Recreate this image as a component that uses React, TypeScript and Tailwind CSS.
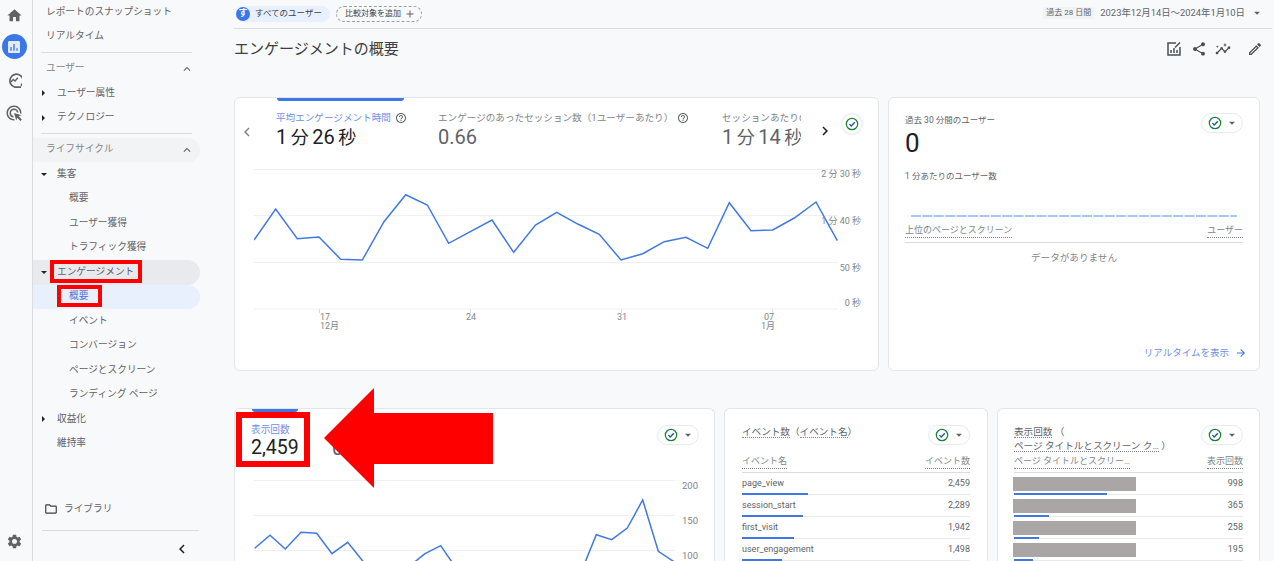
import { MdHome, MdSettings, MdOutlineFolder, MdShare, MdOutlineEdit, MdChevronLeft, MdChevronRight, MdArrowForward, MdArrowDropDown, MdExpandLess, MdHelpOutline, MdInsights, MdAdd } from "react-icons/md";

const font = 'Roboto, "Noto Sans CJK JP", sans-serif';

const navRows = [
  { label: "レポートのスナップショット", indent: "pl-[13px]" },
  { label: "リアルタイム", indent: "pl-[13px]" },
  { line: true },
  { label: "ユーザー", indent: "pl-[13px]", heading: true },
  { label: "ユーザー属性", indent: "pl-[24px]", arrow: "right" },
  { label: "テクノロジー", indent: "pl-[24px]", arrow: "right" },
  { line: true },
  { label: "ライフサイクル", indent: "pl-[13px]", heading: true, pill: "bg-[#f1f3f4]" },
  { label: "集客", indent: "pl-[24px]", arrow: "down" },
  { label: "概要", indent: "pl-[36px]" },
  { label: "ユーザー獲得", indent: "pl-[36px]" },
  { label: "トラフィック獲得", indent: "pl-[36px]" },
  { label: "エンゲージメント", indent: "pl-[24px]", arrow: "down", pill: "bg-[#e8eaed]" },
  { label: "概要", indent: "pl-[36px]", pill: "bg-[#e8f0fe]", active: true },
  { label: "イベント", indent: "pl-[36px]" },
  { label: "コンバージョン", indent: "pl-[36px]" },
  { label: "ページとスクリーン", indent: "pl-[36px]" },
  { label: "ランディング ページ", indent: "pl-[36px]" },
  { label: "収益化", indent: "pl-[24px]", arrow: "right" },
  { label: "維持率", indent: "pl-[24px]" },
];

const eventRows = [
  { name: "page_view", value: "2,459", bar: 66 },
  { name: "session_start", value: "2,289", bar: 61 },
  { name: "first_visit", value: "1,942", bar: 52 },
  { name: "user_engagement", value: "1,498", bar: 40 },
];

const pageRows = [
  { value: "998", bar: 93 },
  { value: "365", bar: 35 },
  { value: "258", bar: 25 },
  { value: "195", bar: 19 },
];

const topLine = "254,240 275.7,209 297.3,238.7 319,237 340.7,259.3 362.3,260 384,221.7 405.7,194.7 427.3,205 448.7,243.3 470.3,231.7 492,220 513.7,252.3 535.5,225 556.7,212.3 578.3,224.3 599.3,234.3 621,260 642.7,253.7 664.3,241.7 686,237.3 707.7,248.3 729.3,202.7 751,230.7 772.7,230 794.3,218 816,202 837.3,240.7";
const bottomLine = "254.7,547.3 270,534.3 285.3,548 301,531.3 316.7,532.3 332,552.7 347.7,541.3 363.3,560.7 379,580 399,580 415,560.7 425,552.7 440.7,544.7 451.7,560.7 465,580 570,580 585.3,560.7 596.3,533.7 611.7,538.7 627.3,527 642.7,499 658.3,550.3 674,560.7";

function CheckBadge() {
  return (
    <svg viewBox="0 0 16 16" className="h-[14px] w-[14px]">
      <circle cx="8" cy="8" r="6.5" fill="none" stroke="#188038" strokeWidth="1.4" />
      <path d="M5 8.2l2.1 2.1L11.2 6" fill="none" stroke="#174ea6" strokeWidth="1.4" />
    </svg>
  );
}

function StatusPill() {
  return (
    <div className="flex h-[20px] w-[42px] shrink-0 items-center rounded-full border border-[#e8eaed] bg-white pl-[6px]">
      <CheckBadge />
      <MdArrowDropDown className="ml-[3px] h-[14px] w-[14px] text-[#5f6368]" />
    </div>
  );
}

function Duration({ min, sec }: { min: string; sec: string }) {
  return (
    <>
      {min} <span className="text-[18px]">分</span> {sec} <span className="text-[18px]">秒</span>
    </>
  );
}

function Sidebar() {
  return (
    <aside className="flex h-full w-[176px] shrink-0 flex-col text-[9.7px] text-[#5f6368]">
      {navRows.map((row, i) =>
        row.line ? (
          <div key={i} className="my-[3.25px] ml-[8px] mr-[17px] h-px shrink-0 bg-[#dadce0]" />
        ) : (
          <div
            key={i}
            className={`relative mr-[9px] flex h-[24.5px] shrink-0 items-center justify-between rounded-r-full pr-[6px] ${row.indent} ${row.pill ?? ""} ${row.active ? "text-[#4f74d9]" : ""} ${row.heading ? "text-[#80868b]" : ""}`}
          >
            {row.arrow === "right" && <span className="absolute left-[9px] h-0 w-0 border-y-[3px] border-l-[3px] border-y-transparent border-l-[#202124]" />}
            {row.arrow === "down" && <span className="absolute left-[8px] h-0 w-0 border-x-[3px] border-t-[3px] border-x-transparent border-t-[#202124]" />}
            <span>{row.label}</span>
            {row.heading && <MdExpandLess className="h-[14px] w-[14px] text-[#5f6368]" />}
          </div>
        )
      )}
      <div className="mt-[46px] flex items-center pl-[11px]">
        <MdOutlineFolder className="h-[14px] w-[14px] text-[#3c4043]" />
        <span className="ml-[6px]">ライブラリ</span>
      </div>
      <div className="ml-[9px] mr-[10px] mt-[13px] h-px bg-[#dadce0]" />
      <div className="flex justify-end pr-[18px] pt-[9px]">
        <MdChevronLeft className="h-[18px] w-[18px] text-[#202124]" />
      </div>
    </aside>
  );
}

function Rail() {
  return (
    <nav className="flex h-full w-[33px] shrink-0 flex-col items-center border-r border-[#dadce0] pr-[4px] text-[#5f6368]">
      <MdHome className="mt-[7px] h-[17px] w-[17px]" />
      <div className="mt-[10px] flex h-[25px] w-[25px] items-center justify-center rounded-full bg-[#3b78e7]">
        <svg viewBox="0 0 14 14" className="h-[12px] w-[12px]">
          <rect x="0" y="0" width="14" height="14" rx="1.5" fill="#ffffff" opacity="0.85" />
          <path d="M3.5 7v4.5M7 3.5v8M10.5 8.5v3" stroke="#3b78e7" strokeWidth="1.6" />
        </svg>
      </div>
      <svg viewBox="0 0 16 16" className="mt-[14px] h-[15px] w-[15px]" fill="none" stroke="currentColor" strokeWidth="1.8">
        <path d="M14.8 13.5A7 7 0 1 0 8 15h7" />
        <path d="M4.2 9.5l2.4-2.6 2 1.6 3-3.4" strokeWidth="1.5" />
      </svg>
      <svg viewBox="0 0 24 24" className="mt-[16px] h-[18px] w-[18px]" fill="currentColor">
        <path d="M11.71 17.99A5.993 5.993 0 0 1 6 12c0-3.31 2.69-6 6-6 3.22 0 5.84 2.53 5.99 5.71l-2.1-.63A3.999 3.999 0 0 0 12 8c-2.21 0-4 1.79-4 4 0 1.89 1.31 3.47 3.08 3.89l.63 2.1zM22 12c0 .3-.01.6-.04.9l-1.97-.59c.01-.1.01-.21.01-.31 0-4.42-3.58-8-8-8s-8 3.58-8 8 3.58 8 8 8c.1 0 .21 0 .31-.01l.59 1.97c-.3.03-.6.04-.9.04-5.52 0-10-4.48-10-10S6.48 2 12 2s10 4.48 10 10zm-3.77 4.26L22 15l-10-3 3 10 1.26-3.77 4.27 4.27 1.98-1.98-4.28-4.26z" />
      </svg>
      <MdSettings className="mb-[11px] mt-auto h-[17px] w-[17px]" />
    </nav>
  );
}

function TopChart() {
  const label = "fill-[#80868b] text-[9px]";
  return (
    <svg viewBox="254 165 610 170" className="ml-[19px] block h-[170px] w-[610px]">
      {[169.5, 215.5, 262.5, 309].map((y) => (
        <line key={y} x1="254" x2={y === 169.5 ? 861 : 838} y1={y} y2={y} stroke="#eff0f1" strokeWidth="1" />
      ))}
      {[319.5, 470.5, 621.5, 772.5].map((x) => (
        <line key={x} x1={x} x2={x} y1="309" y2="313" stroke="#dadce0" />
      ))}
      <polyline points={topLine} fill="none" stroke="#4079e3" strokeWidth="1.5" />
      <text x="861" y="177" textAnchor="end" className={label}>2 分 30 秒</text>
      <text x="861" y="223.5" textAnchor="end" className={label}>1 分 40 秒</text>
      <text x="861" y="270.5" textAnchor="end" className={label}>50 秒</text>
      <text x="861" y="306" textAnchor="end" className={label}>0 秒</text>
      <text x="320" y="319.5" className={label}>17</text>
      <text x="320" y="328.5" className={label}>12月</text>
      <text x="466" y="319.5" className={label}>24</text>
      <text x="617" y="319.5" className={label}>31</text>
      <text x="764" y="319.5" className={label}>07</text>
      <text x="761" y="328.5" className={label}>1月</text>
    </svg>
  );
}

function BottomChart() {
  const label = "fill-[#80868b] text-[9.5px]";
  return (
    <svg viewBox="254 474 449 87" className="ml-[19px] block h-[87px] w-[449px]">
      {[479.5, 514.5, 549.5].map((y) => (
        <line key={y} x1="254" x2="675" y1={y} y2={y} stroke="#eff0f1" />
      ))}
      <polyline points={bottomLine} fill="none" stroke="#4079e3" strokeWidth="1.5" />
      <text x="698" y="488" textAnchor="end" className={label}>200</text>
      <text x="698" y="523" textAnchor="end" className={label}>150</text>
      <text x="698" y="558" textAnchor="end" className={label}>100</text>
    </svg>
  );
}

function EngagementCard() {
  return (
    <section className="relative h-[274px] w-[645px] shrink-0 overflow-hidden rounded-[6px] border border-[#e3e5e8] bg-white">
      <div className="absolute left-[42px] top-0 h-[3px] w-[127px] rounded-b-[3px] bg-[#3f78e0]" />
      <div className="flex h-[67px] items-start">
        <MdChevronLeft className="ml-[3px] mt-[25px] h-[18px] w-[18px] text-[#80868b]" />
        <div className="ml-[20px] mt-[13px] w-[162px] shrink-0">
          <div className="flex items-center text-[9.6px] text-[#6f8fe8]">
            <span className="h-[14px] leading-[14px]">平均エンゲージメント時間</span>
            <MdHelpOutline className="ml-[4px] h-[12px] w-[12px] text-[#5f6368]" />
          </div>
          <div className="text-[20px] leading-[24px] text-[#202124] [word-spacing:-1.5px]">
            <Duration min="1" sec="26" />
          </div>
        </div>
        <div className="mt-[13px] w-[284px] shrink-0">
          <div className="flex items-center text-[9.6px] text-[#80868b]">
            <span className="h-[14px] leading-[14px]">エンゲージのあったセッション数（1ユーザーあたり）</span>
            <MdHelpOutline className="ml-[4px] h-[12px] w-[12px] text-[#5f6368]" />
          </div>
          <div className="text-[20px] leading-[24px] text-[#5f6368]">0.66</div>
        </div>
        <div className="mt-[13px] w-[79px] shrink-0 overflow-hidden whitespace-nowrap">
          <div className="h-[14px] text-[9.6px] leading-[14px] text-[#80868b]">セッションあたりの平均</div>
          <div className="text-[20px] leading-[24px] text-[#5f6368] [word-spacing:-1.5px]">
            <Duration min="1" sec="14" />
          </div>
        </div>
        <MdChevronRight className="ml-[15px] mt-[24px] h-[18px] w-[18px] text-[#202124]" />
        <div className="ml-[8px] mt-[16px] flex h-[20px] w-[20px] items-center justify-center rounded-full bg-white shadow-[0_0_2px_rgba(60,64,67,0.35)]">
          <CheckBadge />
        </div>
      </div>
      <TopChart />
    </section>
  );
}

function RealtimeCard() {
  return (
    <section className="flex h-[274px] w-[372px] shrink-0 flex-col rounded-[6px] border border-[#e3e5e8] bg-white px-[16px] pt-[15px]">
      <div className="flex justify-between">
        <div>
          <div className="h-[14px] text-[8.5px] leading-[14px] text-[#5f6368]">過去 30 分間のユーザー</div>
          <div className="text-[26px] leading-[32px] text-[#202124]">0</div>
        </div>
        <StatusPill />
      </div>
      <div className="mt-[10px] h-[14px] text-[8.5px] leading-[14px] text-[#5f6368]">1 分あたりのユーザー数</div>
      <svg viewBox="0 0 326 2" className="ml-[6px] mt-[32px] block h-[2px] w-[326px]">
        <line x1="0" x2="326" y1="1" y2="1" stroke="#8ab4f8" strokeWidth="1.5" strokeDasharray="10 1.4" />
      </svg>
      <div className="mt-[7px] flex justify-between border-b border-[#dadce0] pb-[4px] text-[9px] text-[#80868b]">
        <span className="border-b border-dotted border-[#80868b] leading-[13px]">上位のページとスクリーン</span>
        <span className="border-b border-dotted border-[#80868b] leading-[13px]">ユーザー</span>
      </div>
      <div className="mt-[8px] text-center text-[9.6px] text-[#80868b]">データがありません</div>
      <div className="mb-[10px] mt-auto flex items-center justify-end text-[9.5px] text-[#6f8fe8]">
        <span>リアルタイムを表示</span>
        <MdArrowForward className="ml-[6px] mr-[-4px] h-[12px] w-[12px] text-[#3f78e0]" />
      </div>
    </section>
  );
}

function ViewsCard() {
  return (
    <section className="relative w-[481px] shrink-0 rounded-t-[6px] border border-b-0 border-[#e3e5e8] bg-white">
      <div className="absolute left-[17px] top-0 h-[3px] w-[46px] rounded-b-[3px] bg-[#3f78e0]" />
      <div className="flex h-[66px] items-start pr-[15px] pt-[14px]">
        <div className="w-[97px] pl-[16px]">
          <div className="h-[14px] text-[9.7px] leading-[14px] text-[#6f8fe8]">表示回数</div>
          <div className="text-[19.5px] leading-[22px] text-[#202124]">2,459</div>
        </div>
        <div className="mt-[14px] text-[20px] leading-[22px] text-[#5f6368]">0</div>
        <div className="ml-auto mt-[2px]">
          <StatusPill />
        </div>
      </div>
      <BottomChart />
    </section>
  );
}

function TableCard({ title, head, children, width }: { title: React.ReactNode; head: React.ReactNode; children: React.ReactNode; width: string }) {
  return (
    <section className={`shrink-0 rounded-t-[6px] border border-b-0 border-[#e3e5e8] bg-white pt-[16px] ${width}`}>
      <div className="flex h-[30px] items-start justify-between text-[9.6px] leading-[14px] text-[#5f6368]">
        <div>{title}</div>
        <StatusPill />
      </div>
      <div className="flex h-[18px] items-start justify-between border-b border-[#dadce0] text-[9px] leading-[13px] text-[#80868b]">{head}</div>
      {children}
    </section>
  );
}

function EventsCard() {
  return (
    <TableCard
      width="w-[264px] px-[17px]"
      title={
        <>
          <span className="border-b border-dotted border-[#80868b]">イベント数</span>（<span className="border-b border-dotted border-[#80868b]">イベント名</span>）
        </>
      }
      head={
        <>
          <span className="border-b border-dotted border-[#80868b]">イベント名</span>
          <span className="border-b border-dotted border-[#80868b]">イベント数</span>
        </>
      }
    >
      {eventRows.map((row) => (
        <div key={row.name} className="relative flex h-[22px] items-center justify-between border-b border-[#e8eaed] text-[9px] text-[#5f6368]">
          <span>{row.name}</span>
          <span>{row.value}</span>
          <span className="absolute bottom-[-1px] left-0 h-[2px] bg-[#3f78e0]" style={{ width: row.bar }} />
        </div>
      ))}
    </TableCard>
  );
}

function PagesCard() {
  return (
    <TableCard
      width="w-[263px] px-[16px]"
      title={
        <>
          <span className="border-b border-dotted border-[#80868b]">表示回数</span> （<br />
          <span className="border-b border-dotted border-[#80868b]">ページ タイトルとスクリーン ク…</span> ）
        </>
      }
      head={
        <>
          <span className="border-b border-dotted border-[#80868b]">ページ タイトルとスクリー…</span>
          <span className="border-b border-dotted border-[#80868b]">表示回数</span>
        </>
      }
    >
      {pageRows.map((row) => (
        <div key={row.value} className="relative flex h-[22px] items-center justify-between border-b border-[#e8eaed] text-[9px] text-[#5f6368]">
          <span className="ml-[-1px] h-[14px] w-[123px] bg-[#aaa6a5]" />
          <span>{row.value}</span>
          <span className="absolute bottom-[-1px] left-0 h-[2px] bg-[#3f78e0]" style={{ width: row.bar }} />
        </div>
      ))}
    </TableCard>
  );
}

function MainArea() {
  return (
    <main className="flex h-full min-w-0 flex-1 flex-col overflow-hidden pl-[25px] pr-[2px]">
      <header className="flex h-[29px] shrink-0 items-center justify-between border-b border-[#dadce0] pb-[1px] pl-[2px] pr-[8px]">
        <div className="flex items-center whitespace-nowrap">
          <div className="flex h-[16px] w-[94px] items-center rounded-full bg-[#e8f0fe] text-[8.5px] text-[#3c4043]">
            <span className="flex h-[14px] w-[14px] items-center justify-center rounded-full bg-[#3b78e7] text-[9px] font-bold text-white">す</span>
            <span className="ml-[5px]">すべてのユーザー</span>
          </div>
          <div className="ml-[6px] flex h-[16px] w-[86px] items-center rounded-full border border-dashed border-[#9aa0a6] pl-[8px] text-[8px] text-[#3c4043]">
            <span>比較対象を追加</span>
            <MdAdd className="ml-[3px] h-[12px] w-[12px] text-[#5f6368]" />
          </div>
        </div>
        <div className="flex items-center text-[9.4px] text-[#5f6368]">
          <span className="flex h-[12px] items-center bg-[#f1f3f4] px-[3px] text-[8px] leading-[12px]">過去 28 日間</span>
          <span className="ml-[6px]">2023年12月14日～2024年1月10日</span>
          <MdArrowDropDown className="ml-[5px] h-[14px] w-[14px]" />
        </div>
      </header>
      <div className="flex h-[40px] shrink-0 items-center justify-between pr-[9px]">
        <h1 className="text-[15px] font-normal text-[#3c4043]">エンゲージメントの概要</h1>
        <div className="flex items-center text-[#4b4f54]">
          <svg viewBox="0 0 16 16" className="h-[16px] w-[16px]" fill="none" stroke="currentColor" strokeWidth="1.5">
            <path d="M10 2H2v12h12V6" />
            <path d="M5 12V9M8 12V7M11 12V9M9 6.5l5-5" />
          </svg>
          <MdShare className="ml-[9px] h-[16px] w-[16px]" />
          <MdInsights className="ml-[8px] h-[16px] w-[16px]" />
          <MdOutlineEdit className="ml-[16px] h-[16px] w-[16px]" />
        </div>
      </div>
      <div className="mt-[28px] flex shrink-0 gap-[9px]">
        <EngagementCard />
        <RealtimeCard />
      </div>
      <div className="mt-[37px] flex min-h-0 flex-1 gap-[9px]">
        <ViewsCard />
        <EventsCard />
        <PagesCard />
      </div>
    </main>
  );
}

export default function App() {
  return (
    <div className="relative flex h-[561px] w-[1274px] overflow-hidden bg-[#f8f9fa]" style={{ fontFamily: font }}>
      <Rail />
      <Sidebar />
      <MainArea />
      {/* red annotations drawn over the screenshot */}
      <div className="absolute left-[50px] top-[260px] h-[23px] w-[92px] border-[4px] border-[#ff0000]" />
      <div className="absolute left-[57px] top-[285px] h-[22px] w-[45px] border-[4px] border-[#ff0000]" />
      <div className="absolute left-[236px] top-[412px] h-[55px] w-[74px] border-[6px] border-[#ff0000]" />
      <svg className="absolute left-[324px] top-[388px] h-[100px] w-[169px]" viewBox="0 0 169 100">
        <polygon points="0,50 50,0 50,25 169,25 169,76 50,76 50,100" fill="#ff0000" />
      </svg>
    </div>
  );
}
